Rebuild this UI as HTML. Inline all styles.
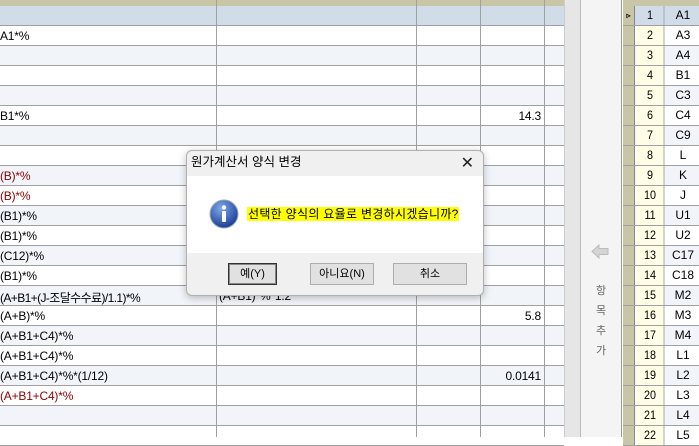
<!DOCTYPE html>
<html><head><meta charset="utf-8"><style>
*{margin:0;padding:0;box-sizing:border-box}
body{width:699px;height:437px;overflow:hidden;background:#fff;position:relative;font-family:"Liberation Sans","Noto Sans CJK KR",sans-serif;font-size:12px;color:#000}
.a{position:absolute}
.row{position:absolute;left:0;width:564px;height:20px;border-bottom:1px solid #a0a0a0}
.row span{position:absolute;top:3px;white-space:nowrap;letter-spacing:-0.2px}
.row span.n{right:23px}
.vl{position:absolute;top:0;width:1px;height:437px;background:#a0a0a0}
.r{color:#8b0000}
.rr{position:absolute;left:623px;width:76px;height:20px;border-bottom:1px solid #a0a0a0}
.rr b{position:absolute;left:0;top:0;width:12px;height:19px;background:#c8c6a6;border-right:1px solid #888}
.rr i{font-style:normal;position:absolute;left:12px;top:0;width:31px;height:19px;background:#fffde6;border-right:1px solid #a0a0a0;text-align:center;line-height:19px;transform:scaleX(.9)}
.rr u{text-decoration:none;position:absolute;left:44px;width:32px;top:0;text-align:center;line-height:19px}
.btn{position:absolute;top:263px;height:22px;border:1px solid #adadad;background:#e1e1e1;text-align:center;line-height:20px;font-size:11px}
</style></head><body>
<div class="a" style="left:0;top:0;width:564px;height:6px;background:#c8c6a6"></div>
<div class="row" style="top:6px;background:#d0dce8"></div>
<div class="row" style="top:26px"><span>A1*%</span></div>
<div class="row" style="top:46px;background:#f1f5fa"></div>
<div class="row" style="top:66px"></div>
<div class="row" style="top:86px;background:#f1f5fa"></div>
<div class="row" style="top:106px"><span>B1*%</span><span class="n">14.3</span></div>
<div class="row" style="top:126px;background:#f1f5fa"></div>
<div class="row" style="top:146px"></div>
<div class="row" style="top:166px;background:#f1f5fa"><span class="r">(B)*%</span></div>
<div class="row" style="top:186px"><span class="r">(B)*%</span></div>
<div class="row" style="top:206px;background:#f1f5fa"><span>(B1)*%</span></div>
<div class="row" style="top:226px"><span>(B1)*%</span></div>
<div class="row" style="top:246px;background:#f1f5fa"><span>(C12)*%</span></div>
<div class="row" style="top:266px"><span>(B1)*%</span></div>
<div class="row" style="top:286px;background:#f1f5fa"><span style="letter-spacing:-0.6px">(A+B1+(J-조달수수료)/1.1)*%</span><span style="left:219px">(A+B1)*%*1.2</span></div>
<div class="row" style="top:306px"><span>(A+B)*%</span><span class="n">5.8</span></div>
<div class="row" style="top:326px;background:#f1f5fa"><span>(A+B1+C4)*%</span></div>
<div class="row" style="top:346px"><span>(A+B1+C4)*%</span></div>
<div class="row" style="top:366px;background:#f1f5fa"><span>(A+B1+C4)*%*(1/12)</span><span class="n">0.0141</span></div>
<div class="row" style="top:386px"><span class="r">(A+B1+C4)*%</span></div>
<div class="row" style="top:406px;background:#f1f5fa"></div>
<div class="row" style="top:426px"></div>
<div class="vl" style="left:216px"></div><div class="vl" style="left:416px"></div><div class="vl" style="left:480px"></div><div class="vl" style="left:544px"></div>
<div class="a" style="left:564px;top:0;width:16px;height:437px;background:#e6e6e6;border-left:1px solid #ccc"></div>
<div class="a" style="left:580px;top:0;width:42px;height:437px;background:#f4f4f4;border-left:1px solid #bbb;border-right:1px solid #999"></div>
<svg class="a" style="left:591px;top:244px" width="18" height="15"><path d="M1 7.5 L8 1 L8 4.5 L17 4.5 L17 10.5 L8 10.5 L8 14 Z" fill="#d4d4d4" stroke="#bbb"/></svg>
<div class="a" style="left:593px;top:281px;width:16px;color:#666;font-size:11px;line-height:20px;text-align:center">항<br>목<br>추<br>가</div>
<div class="a" style="left:623px;top:0;width:76px;height:6px;background:#c8c6a6"></div>
<div class="rr" style="top:6px;background:#d0dce8"><b style="font-size:8px;line-height:19px;text-align:center">▹</b><i style="background:#d0dce8">1</i><u>A1</u></div>
<div class="rr" style="top:26px"><b></b><i>2</i><u>A3</u></div>
<div class="rr" style="top:46px;background:#f1f5fa"><b></b><i>3</i><u>A4</u></div>
<div class="rr" style="top:66px"><b></b><i>4</i><u>B1</u></div>
<div class="rr" style="top:86px;background:#f1f5fa"><b></b><i>5</i><u>C3</u></div>
<div class="rr" style="top:106px"><b></b><i>6</i><u>C4</u></div>
<div class="rr" style="top:126px;background:#f1f5fa"><b></b><i>7</i><u>C9</u></div>
<div class="rr" style="top:146px"><b></b><i>8</i><u>L</u></div>
<div class="rr" style="top:166px;background:#f1f5fa"><b></b><i>9</i><u>K</u></div>
<div class="rr" style="top:186px"><b></b><i>10</i><u>J</u></div>
<div class="rr" style="top:206px;background:#f1f5fa"><b></b><i>11</i><u>U1</u></div>
<div class="rr" style="top:226px"><b></b><i>12</i><u>U2</u></div>
<div class="rr" style="top:246px;background:#f1f5fa"><b></b><i>13</i><u>C17</u></div>
<div class="rr" style="top:266px"><b></b><i>14</i><u>C18</u></div>
<div class="rr" style="top:286px;background:#f1f5fa"><b></b><i>15</i><u>M2</u></div>
<div class="rr" style="top:306px"><b></b><i>16</i><u>M3</u></div>
<div class="rr" style="top:326px;background:#f1f5fa"><b></b><i>17</i><u>M4</u></div>
<div class="rr" style="top:346px"><b></b><i>18</i><u>L1</u></div>
<div class="rr" style="top:366px;background:#f1f5fa"><b></b><i>19</i><u>L2</u></div>
<div class="rr" style="top:386px"><b></b><i>20</i><u>L3</u></div>
<div class="rr" style="top:406px;background:#f1f5fa"><b></b><i>21</i><u>L4</u></div>
<div class="rr" style="top:426px"><b></b><i>22</i><u>L5</u></div>
<div class="a" style="left:186px;top:150px;width:298px;height:146px;border:1px solid #b0b0b0;border-radius:6px;background:#f0f0f0;box-shadow:0 2px 8px rgba(0,0,0,.25);overflow:hidden">
 <div class="a" style="left:0;top:0;width:296px;height:25px;line-height:22px;padding-left:4px;font-size:12.5px">원가계산서 양식 변경</div>
 <div class="a" style="right:9px;top:2px;font-size:16px;color:#222">✕</div>
 <div class="a" style="left:0;top:25px;width:296px;height:77px;background:#fff"></div>
 <svg class="a" style="left:22px;top:48px" width="30" height="30"><defs><radialGradient id="g" cx="40%" cy="30%" r="70%"><stop offset="0" stop-color="#7fa8e8"/><stop offset="1" stop-color="#1b3f9a"/></radialGradient></defs><circle cx="15" cy="15" r="14" fill="url(#g)" stroke="#9aa" stroke-width="1"/><circle cx="15" cy="8.5" r="2.2" fill="#fff"/><rect x="13" y="12" width="4" height="11" rx="1" fill="#fff"/></svg>
 <div class="a" style="left:60px;top:56px;height:14px;width:212px;background:#ffff00;font-size:12px;line-height:14px;padding-left:1px;white-space:nowrap;letter-spacing:0.3px">선택한 양식의 요율로 변경하시겠습니까?</div>
</div>
<div class="btn" style="left:228px;width:49px;border:1px solid #333;box-shadow:inset 0 0 0 1px #888">예(Y)</div>
<div class="btn" style="left:310px;width:64px">아니요(N)</div>
<div class="btn" style="left:393px;width:74px">취소</div>
</body></html>
